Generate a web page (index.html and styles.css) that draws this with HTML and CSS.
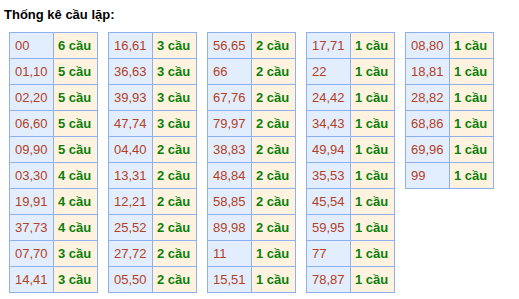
FILE: index.html
```html
<!DOCTYPE html>
<html lang="vi">
<head>
<meta charset="utf-8">
<title>Thống kê cầu lặp</title>
<link rel="stylesheet" href="styles.css">
</head>
<body>
<h3 class="title">Thống kê cầu lặp:</h3>
<div class="tables">
  <div class="tbl">
    <div class="num">00</div><div class="cnt">6 cầu</div>
    <div class="num">01,10</div><div class="cnt">5 cầu</div>
    <div class="num">02,20</div><div class="cnt">5 cầu</div>
    <div class="num">06,60</div><div class="cnt">5 cầu</div>
    <div class="num">09,90</div><div class="cnt">5 cầu</div>
    <div class="num">03,30</div><div class="cnt">4 cầu</div>
    <div class="num">19,91</div><div class="cnt">4 cầu</div>
    <div class="num">37,73</div><div class="cnt">4 cầu</div>
    <div class="num">07,70</div><div class="cnt">3 cầu</div>
    <div class="num">14,41</div><div class="cnt">3 cầu</div>
  </div>
  <div class="tbl">
    <div class="num">16,61</div><div class="cnt">3 cầu</div>
    <div class="num">36,63</div><div class="cnt">3 cầu</div>
    <div class="num">39,93</div><div class="cnt">3 cầu</div>
    <div class="num">47,74</div><div class="cnt">3 cầu</div>
    <div class="num">04,40</div><div class="cnt">2 cầu</div>
    <div class="num">13,31</div><div class="cnt">2 cầu</div>
    <div class="num">12,21</div><div class="cnt">2 cầu</div>
    <div class="num">25,52</div><div class="cnt">2 cầu</div>
    <div class="num">27,72</div><div class="cnt">2 cầu</div>
    <div class="num">05,50</div><div class="cnt">2 cầu</div>
  </div>
  <div class="tbl">
    <div class="num">56,65</div><div class="cnt">2 cầu</div>
    <div class="num">66</div><div class="cnt">2 cầu</div>
    <div class="num">67,76</div><div class="cnt">2 cầu</div>
    <div class="num">79,97</div><div class="cnt">2 cầu</div>
    <div class="num">38,83</div><div class="cnt">2 cầu</div>
    <div class="num">48,84</div><div class="cnt">2 cầu</div>
    <div class="num">58,85</div><div class="cnt">2 cầu</div>
    <div class="num">89,98</div><div class="cnt">2 cầu</div>
    <div class="num">11</div><div class="cnt">1 cầu</div>
    <div class="num">15,51</div><div class="cnt">1 cầu</div>
  </div>
  <div class="tbl">
    <div class="num">17,71</div><div class="cnt">1 cầu</div>
    <div class="num">22</div><div class="cnt">1 cầu</div>
    <div class="num">24,42</div><div class="cnt">1 cầu</div>
    <div class="num">34,43</div><div class="cnt">1 cầu</div>
    <div class="num">49,94</div><div class="cnt">1 cầu</div>
    <div class="num">35,53</div><div class="cnt">1 cầu</div>
    <div class="num">45,54</div><div class="cnt">1 cầu</div>
    <div class="num">59,95</div><div class="cnt">1 cầu</div>
    <div class="num">77</div><div class="cnt">1 cầu</div>
    <div class="num">78,87</div><div class="cnt">1 cầu</div>
  </div>
  <div class="tbl">
    <div class="num">08,80</div><div class="cnt">1 cầu</div>
    <div class="num">18,81</div><div class="cnt">1 cầu</div>
    <div class="num">28,82</div><div class="cnt">1 cầu</div>
    <div class="num">68,86</div><div class="cnt">1 cầu</div>
    <div class="num">69,96</div><div class="cnt">1 cầu</div>
    <div class="num">99</div><div class="cnt">1 cầu</div>
  </div>
</div>
</body>
</html>
```
FILE: styles.css
```css
html, body {
  margin: 0;
  background: #ffffff;
}
body {
  padding: 7px 4px;
  font-family: "Liberation Sans", Arial, sans-serif;
  font-size: 13px;
}
.title {
  margin: 0 0 10px 0;
  font-size: 13px;
  line-height: 15px;
  font-weight: bold;
  color: #000;
}
.tables {
  display: flex;
  align-items: flex-start;
  gap: 10px;
  margin-left: 5px;
}
.tbl {
  display: grid;
  grid-template-columns: 44px 44px;
  grid-auto-rows: 26px;
  border-left: 1px solid #8fb0ee;
  border-top: 1px solid #8fb0ee;
}
.tbl > div {
  border-right: 1px solid #8fb0ee;
  border-bottom: 1px solid #8fb0ee;
  line-height: 25px;
  white-space: nowrap;
}
.num {
  background: #e2eefd;
  color: #b4401f;
  padding-left: 5px;
}
.cnt {
  background: #fff3e0;
  color: #0a7f0a;
  font-weight: bold;
  padding-left: 4px;
}
```
